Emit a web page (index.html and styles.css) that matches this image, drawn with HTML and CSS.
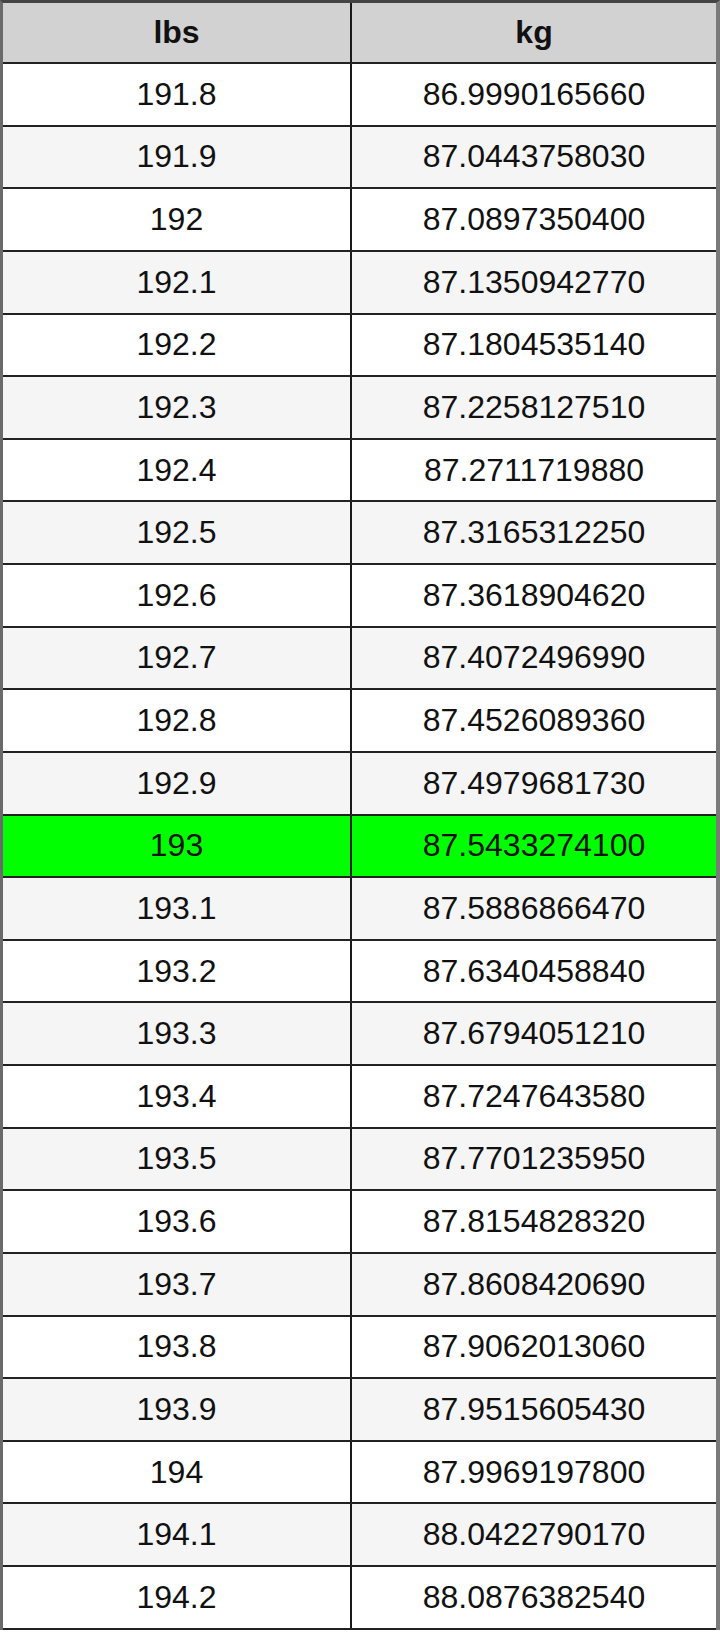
FILE: index.html
```html
<!DOCTYPE html>
<html>
<head>
<meta charset="utf-8">
<link rel="stylesheet" href="styles.css">
</head>
<body>
<div class="table">
  <div class="row head"><div class="cell">lbs</div><div class="cell">kg</div></div>
  <div class="row"><div class="cell">191.8</div><div class="cell">86.9990165660</div></div>
  <div class="row alt"><div class="cell">191.9</div><div class="cell">87.0443758030</div></div>
  <div class="row"><div class="cell">192</div><div class="cell">87.0897350400</div></div>
  <div class="row alt"><div class="cell">192.1</div><div class="cell">87.1350942770</div></div>
  <div class="row"><div class="cell">192.2</div><div class="cell">87.1804535140</div></div>
  <div class="row alt"><div class="cell">192.3</div><div class="cell">87.2258127510</div></div>
  <div class="row"><div class="cell">192.4</div><div class="cell">87.2711719880</div></div>
  <div class="row alt"><div class="cell">192.5</div><div class="cell">87.3165312250</div></div>
  <div class="row"><div class="cell">192.6</div><div class="cell">87.3618904620</div></div>
  <div class="row alt"><div class="cell">192.7</div><div class="cell">87.4072496990</div></div>
  <div class="row"><div class="cell">192.8</div><div class="cell">87.4526089360</div></div>
  <div class="row alt"><div class="cell">192.9</div><div class="cell">87.4979681730</div></div>
  <div class="row hl"><div class="cell">193</div><div class="cell">87.5433274100</div></div>
  <div class="row alt"><div class="cell">193.1</div><div class="cell">87.5886866470</div></div>
  <div class="row"><div class="cell">193.2</div><div class="cell">87.6340458840</div></div>
  <div class="row alt"><div class="cell">193.3</div><div class="cell">87.6794051210</div></div>
  <div class="row"><div class="cell">193.4</div><div class="cell">87.7247643580</div></div>
  <div class="row alt"><div class="cell">193.5</div><div class="cell">87.7701235950</div></div>
  <div class="row"><div class="cell">193.6</div><div class="cell">87.8154828320</div></div>
  <div class="row alt"><div class="cell">193.7</div><div class="cell">87.8608420690</div></div>
  <div class="row"><div class="cell">193.8</div><div class="cell">87.9062013060</div></div>
  <div class="row alt"><div class="cell">193.9</div><div class="cell">87.9515605430</div></div>
  <div class="row"><div class="cell">194</div><div class="cell">87.9969197800</div></div>
  <div class="row alt"><div class="cell">194.1</div><div class="cell">88.0422790170</div></div>
  <div class="row"><div class="cell">194.2</div><div class="cell">88.0876382540</div></div>
</div>
</body>
</html>
```

FILE: styles.css
```css
html, body {
  margin: 0;
  padding: 0;
  background: #ffffff;
}
.table {
  width: 720px;
  box-sizing: border-box;
  border-top: 3px solid #444;
  border-left: 3px solid #6a6a6a;
  border-right: 4px solid #7a7a7a;
  font-family: "Liberation Sans", Arial, sans-serif;
  font-size: 32px;
  color: #111;
}
.row {
  display: grid;
  grid-template-columns: 349px 1fr;
  height: 62.64px;
  box-sizing: border-box;
  border-bottom: 2px solid #222;
  background: #ffffff;
}
.row.alt { background: #f5f5f5; }
.row.hl { background: #00ff00; }
.row.head {
  height: 61px;
  background: #d2d2d2;
  font-weight: bold;
}
.cell {
  display: flex;
  align-items: center;
  justify-content: center;
}
.cell:first-child {
  border-right: 2px solid #1a1a1a;
}
```
